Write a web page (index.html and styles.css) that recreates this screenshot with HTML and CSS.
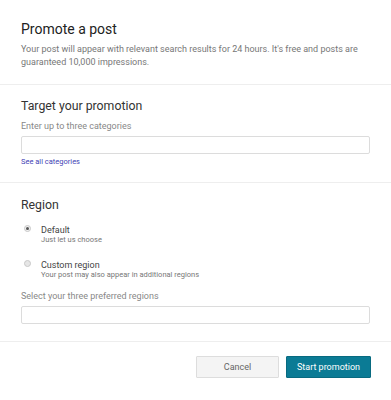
FILE: index.html
```html
<!DOCTYPE html>
<html lang="en">

<head>
    <meta charset="UTF-8">
    <title>Promote a post</title>
    <link rel="stylesheet" href="styles.css">
</head>

<body>
    <main class="dialog">
        <section class="intro">
            <h1>Promote a post</h1>
            <p class="intro-text">Your post will appear with relevant search results for 24 hours. It's free and posts are guaranteed 10,000 impressions.</p>
        </section>
        <section class="block">
            <h2>Target your promotion</h2>
            <label class="field-label" for="categories">Enter up to three categories</label>
            <input class="field" id="categories" type="text">
            <a class="link" href="#">See all categories</a>
        </section>
        <section class="block region">
            <h2>Region</h2>
            <div class="option">
                <span class="radio checked"></span>
                <div>
                    <div class="option-title">Default</div>
                    <div class="option-sub">Just let us choose</div>
                </div>
            </div>
            <div class="option">
                <span class="radio"></span>
                <div>
                    <div class="option-title">Custom region</div>
                    <div class="option-sub">Your post may also appear in additional regions</div>
                </div>
            </div>
            <label class="field-label region-label" for="regions">Select your three preferred regions</label>
            <input class="field" id="regions" type="text">
        </section>
        <footer class="actions">
            <button class="btn btn-cancel">Cancel</button>
            <button class="btn btn-start">Start promotion</button>
        </footer>
    </main>
</body>

</html>
```

FILE: styles.css
```css
body {
    margin: 0;
    background-color: white;
    font-family: Roboto, "Liberation Sans", sans-serif;
}

.dialog {
    width: 391px;
}

.intro {
    padding: 20px 21px 15.5px;
}

h1 {
    margin: 0;
    font-size: 14px;
    line-height: 19px;
    font-weight: 400;
    color: #222;
}

.intro-text {
    margin: 3.5px 0 0;
    font-size: 9px;
    line-height: 13px;
    color: #777;
}

.block {
    border-top: 1px solid #eeeeee;
    padding: 12.5px 21px 15px;
    display: flex;
    flex-direction: column;
}

.region {
    padding-top: 13.5px;
    padding-bottom: 16.5px;
}

h2 {
    margin: 0;
    font-size: 12.3px;
    line-height: 16px;
    font-weight: 400;
    color: #333;
}

.field-label {
    margin-top: 6px;
    font-size: 9px;
    line-height: 12px;
    color: #888;
}

.field {
    margin-top: 4px;
    height: 18px;
    box-sizing: border-box;
    border: 1px solid #dcdcdc;
    border-radius: 2px;
    padding: 0 6px;
}

.link {
    margin-top: 3.5px;
    font-size: 7.5px;
    line-height: 10px;
    color: #3f3fb5;
    text-decoration: none;
    align-self: flex-start;
}

.option {
    display: flex;
    margin-top: 12.5px;
}

.option + .option {
    margin-top: 15px;
}

.radio {
    width: 7px;
    height: 7px;
    box-sizing: border-box;
    border-radius: 50%;
    border: 1px solid #c8c8c8;
    background-color: #e6e6e6;
    margin: 0 10px 0 3px;
    position: relative;
}

.radio.checked {
    background-color: #f0f0f0;
}

.radio.checked::after {
    content: "";
    position: absolute;
    left: 1px;
    top: 1px;
    width: 3px;
    height: 3px;
    border-radius: 50%;
    background-color: #555;
}

.option-title {
    font-size: 9px;
    line-height: 10px;
    color: #444;
}

.option-sub {
    font-size: 7.5px;
    line-height: 10px;
    color: #777;
}

.region-label {
    margin-top: 10px;
}

.actions {
    border-top: 1px solid #eeeeee;
    padding: 14px 20px 22px;
    display: flex;
    justify-content: flex-end;
    gap: 7px;
}

.btn {
    height: 22px;
    font-family: Roboto, "Liberation Sans", sans-serif;
    font-size: 9px;
    border-radius: 1px;
}

.btn-cancel {
    width: 83px;
    background-color: #f4f4f4;
    border: 1px solid #dddddd;
    color: #666;
}

.btn-start {
    width: 85px;
    background-color: #0b7b95;
    border: 1px solid #086a80;
    color: white;
}
```
